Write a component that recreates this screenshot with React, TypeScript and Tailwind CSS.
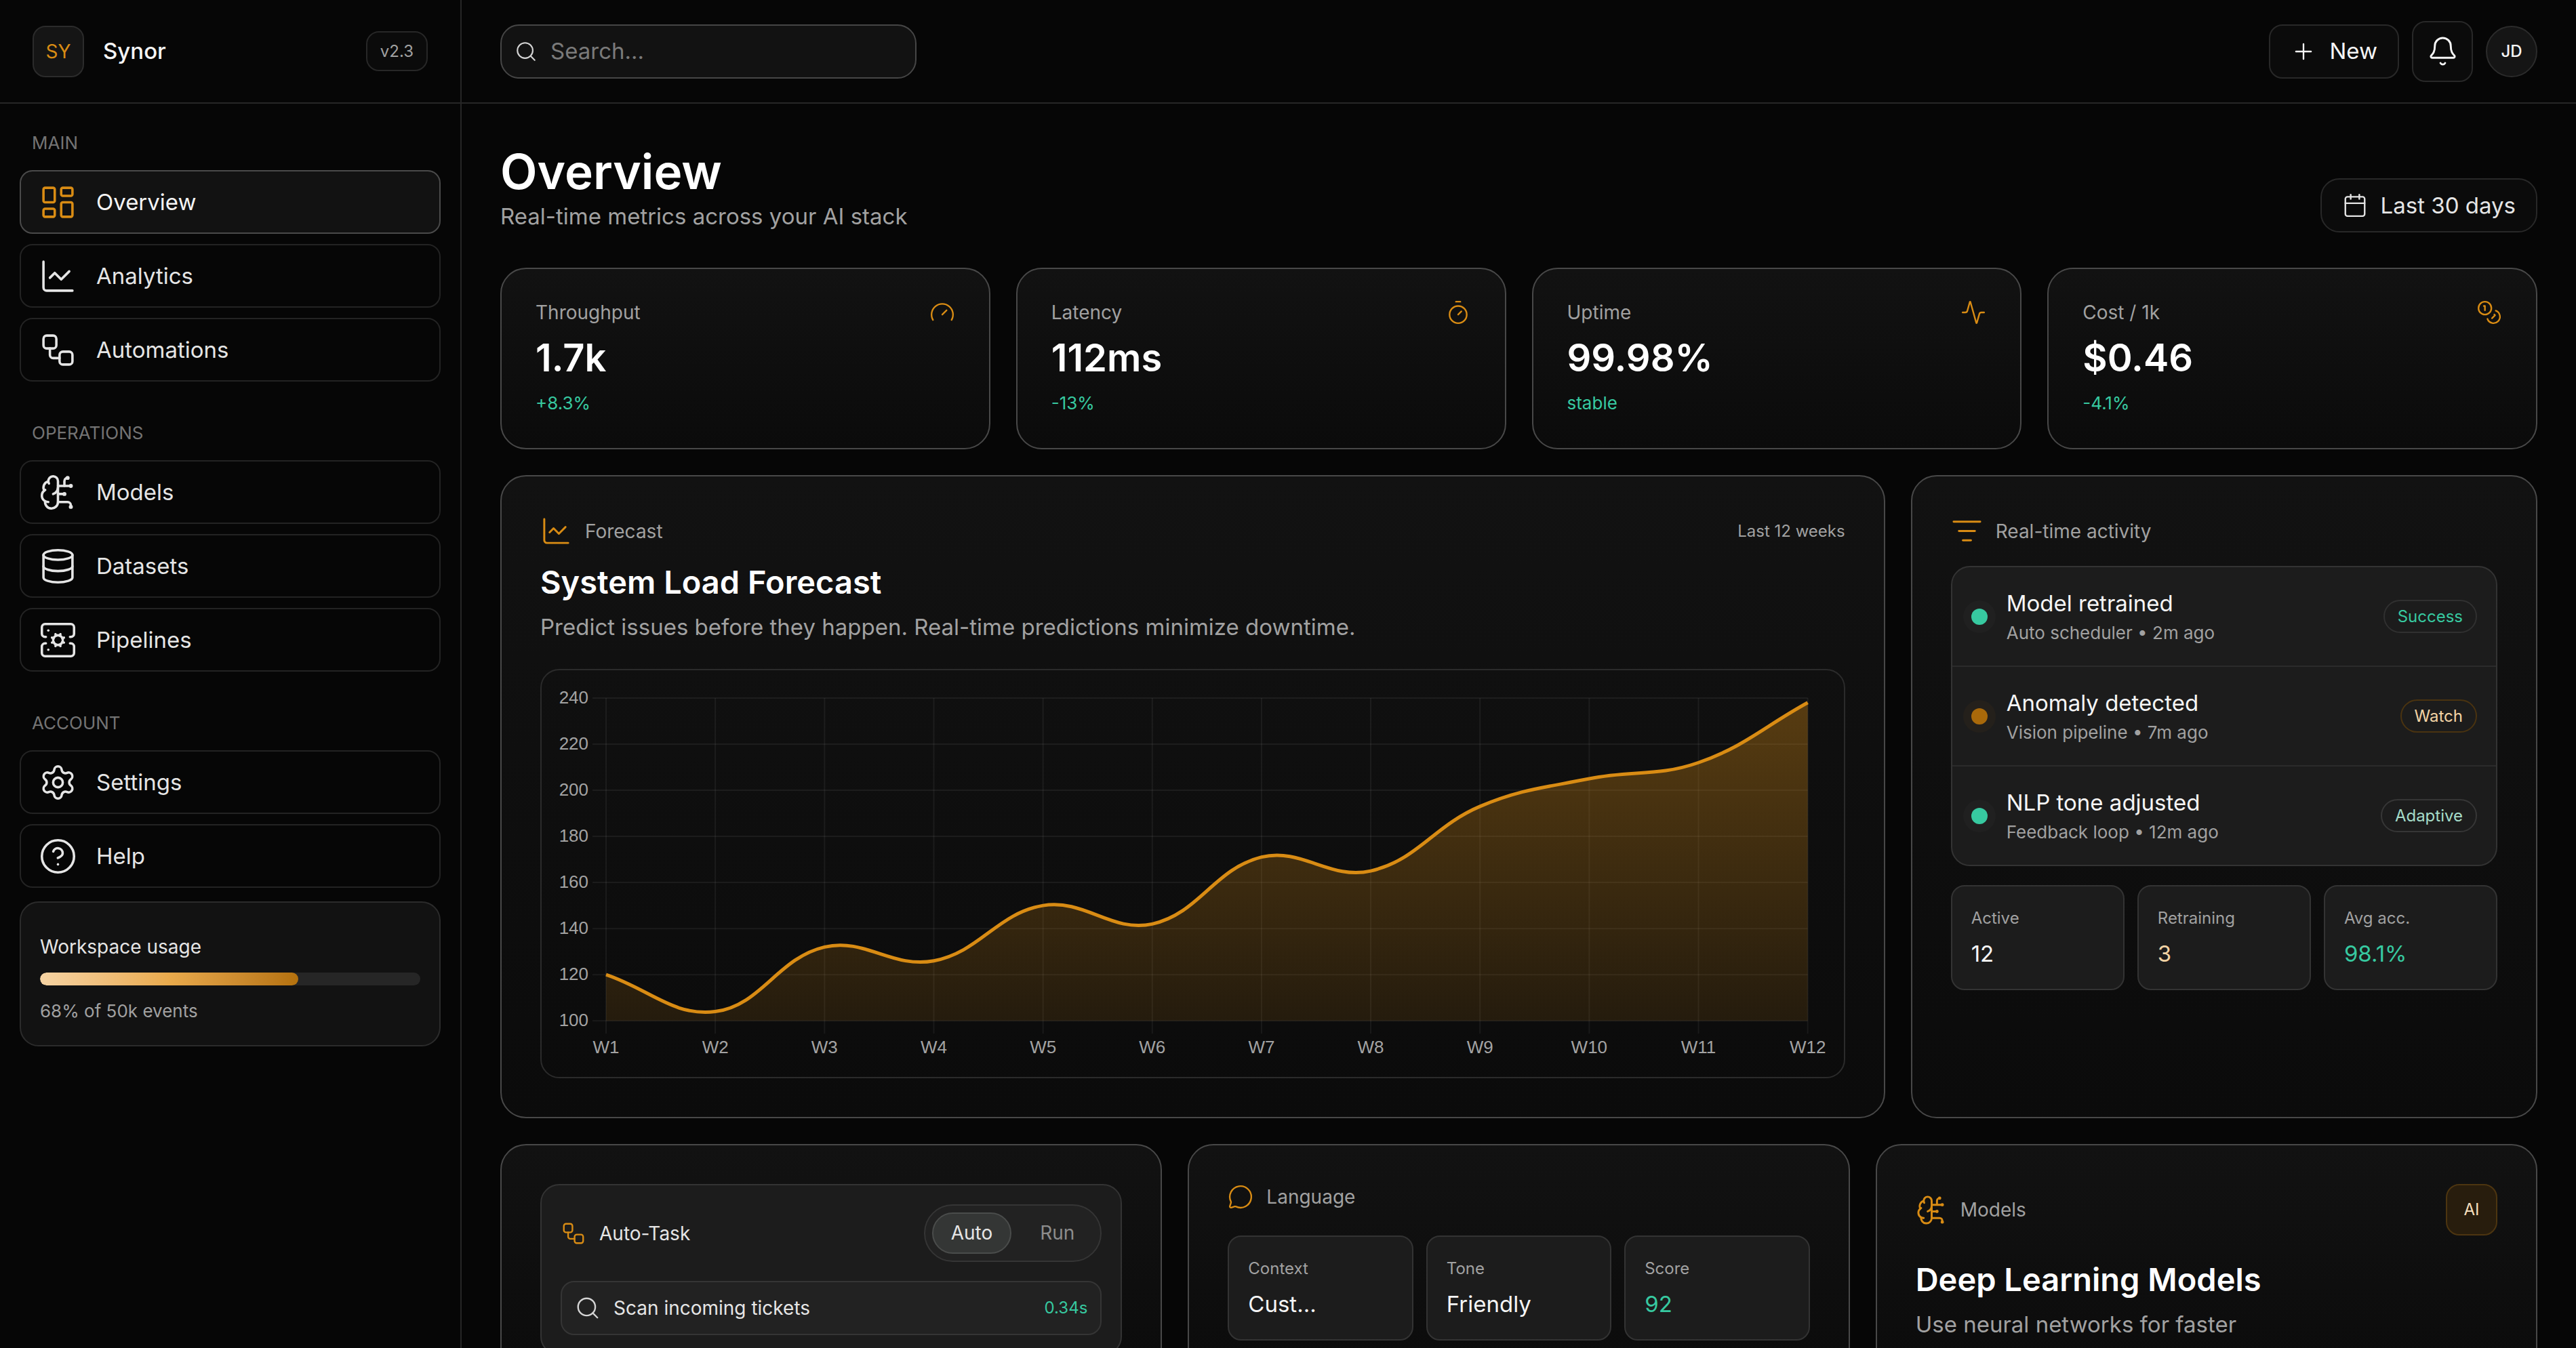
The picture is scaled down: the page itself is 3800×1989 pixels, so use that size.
import {
  Activity,
  Bell,
  BrainCircuit,
  Calendar,
  ChartLine,
  CircleQuestionMark,
  Database,
  Gauge,
  LayoutDashboard,
  ListFilter,
  MessageCircle,
  Plus,
  Search,
  ServerCog,
  Settings,
  Timer,
  Workflow,
} from "lucide-react";

const CoinsIcon = ({ className }: { className?: string }) => (
  <svg
    className={className}
    viewBox="0 0 24 24"
    fill="none"
    stroke="currentColor"
    strokeWidth={1.5}
    strokeLinecap="round"
    strokeLinejoin="round"
    aria-hidden="true"
  >
    <circle cx="8" cy="8" r="6" />
    <path d="M18.09 10.37A6 6 0 1 1 10.34 18" />
    <path d="M7 6h1v4" />
    <path d="m16.71 13.88.7.71-2.82 2.82" />
  </svg>
);

const navSections = [
  {
    title: "MAIN",
    items: [
      { label: "Overview", icon: LayoutDashboard, active: true },
      { label: "Analytics", icon: ChartLine },
      { label: "Automations", icon: Workflow },
    ],
  },
  {
    title: "OPERATIONS",
    items: [
      { label: "Models", icon: BrainCircuit },
      { label: "Datasets", icon: Database },
      { label: "Pipelines", icon: ServerCog },
    ],
  },
  {
    title: "ACCOUNT",
    items: [
      { label: "Settings", icon: Settings },
      { label: "Help", icon: CircleQuestionMark },
    ],
  },
];

const kpis = [
  { label: "Throughput", value: "1.7k", delta: "+8.3%", icon: Gauge },
  { label: "Latency", value: "112ms", delta: "-13%", icon: Timer },
  { label: "Uptime", value: "99.98%", delta: "stable", icon: Activity },
  { label: "Cost / 1k", value: "$0.46", delta: "-4.1%", icon: CoinsIcon },
];

const events = [
  {
    title: "Model retrained",
    meta: "Auto scheduler • 2m ago",
    badge: "Success",
    dot: "bg-[#37c9a0] shadow-[0_0_0_12px_rgba(255,255,255,0.02)]",
    tone: "border-[#303030] text-[#37c9a0]",
  },
  {
    title: "Anomaly detected",
    meta: "Vision pipeline • 7m ago",
    badge: "Watch",
    dot: "bg-[#a9690a] shadow-[0_0_0_12px_rgba(169,105,10,0.06)]",
    tone: "border-[#4a3310] text-[#f2d3a4]",
  },
  {
    title: "NLP tone adjusted",
    meta: "Feedback loop • 12m ago",
    badge: "Adaptive",
    dot: "bg-[#37c9a0] shadow-[0_0_0_12px_rgba(255,255,255,0.02)]",
    tone: "border-[#363636] text-[#a5dcc9]",
  },
];

const usage = 68;

// Chart geometry, in viewBox units
const load = [120, 104, 132, 126, 150, 142, 171, 165, 193, 205, 212, 238];
const ticks = [240, 220, 200, 180, 160, 140, 120, 100];
const chart = { left: 95, right: 1867, top: 41, bottom: 517 };

const xAt = (i: number) => chart.left + (i * (chart.right - chart.left)) / (load.length - 1);
const yAt = (v: number) => chart.bottom - ((v - 100) / 140) * (chart.bottom - chart.top);

const points = load.map((v, i) => ({ x: xAt(i), y: yAt(v) }));

const smoothPath = (tension: number) => {
  const controls = points.map((p, i) => {
    const prev = points[Math.max(i - 1, 0)];
    const next = points[Math.min(i + 1, points.length - 1)];
    const before = Math.hypot(p.x - prev.x, p.y - prev.y);
    const after = Math.hypot(next.x - p.x, next.y - p.y);
    const a = (tension * before) / (before + after);
    const b = (tension * after) / (before + after);
    return {
      inX: p.x - a * (next.x - prev.x),
      inY: p.y - a * (next.y - prev.y),
      outX: p.x + b * (next.x - prev.x),
      outY: p.y + b * (next.y - prev.y),
    };
  });
  return points
    .map((p, i) => {
      if (i === 0) return `M${p.x} ${p.y}`;
      const from = controls[i - 1];
      const to = controls[i];
      return `C${from.outX} ${from.outY} ${to.inX} ${to.inY} ${p.x} ${p.y}`;
    })
    .join(" ");
};

const linePath = smoothPath(0.4);
const areaPath = `${linePath} L${chart.right} ${chart.bottom} L${chart.left} ${chart.bottom} Z`;

const LoadChart = () => (
  <svg viewBox="0 0 1920 600" className="block h-auto w-full" role="img" aria-label="System load by week">
    <defs>
      <linearGradient id="load-fill" gradientUnits="userSpaceOnUse" x1="0" y1={chart.top} x2="0" y2={chart.bottom}>
        <stop offset="0" stopColor="#d98c14" stopOpacity="0.36" />
        <stop offset="1" stopColor="#d98c14" stopOpacity="0.12" />
      </linearGradient>
    </defs>
    <g stroke="#ffffff" strokeOpacity="0.06" strokeWidth="2">
      {ticks.map((t) => (
        <line key={t} x1={chart.left - 20} x2={chart.right} y1={yAt(t)} y2={yAt(t)} />
      ))}
      {points.map((p, i) => (
        <line key={i} x1={p.x} x2={p.x} y1={chart.top} y2={chart.bottom + 19} />
      ))}
    </g>
    <path d={areaPath} fill="url(#load-fill)" />
    <path d={linePath} fill="none" stroke="#d98c14" strokeWidth="5" />
    <g fill="#a3a3a3" fontSize="26" fontFamily="'Liberation Sans', Arial, sans-serif">
      {ticks.map((t) => (
        <text key={t} x={chart.left - 26} y={yAt(t) + 8} textAnchor="end">
          {t}
        </text>
      ))}
      {points.map((p, i) => (
        <text key={i} x={p.x} y={chart.bottom + 48} textAnchor="middle">
          {`W${i + 1}`}
        </text>
      ))}
    </g>
  </svg>
);

const Stat = ({ label, value, tone = "text-neutral-100" }: { label: string; value: string; tone?: string }) => (
  <div className="rounded-[20px] border-2 border-[#333333] bg-[#1c1c1c] p-7">
    <div className="text-[24px]/[38px] text-neutral-400">{label}</div>
    <div className={`mt-[9px] text-[33px]/[48px] ${tone}`}>{value}</div>
  </div>
);

const panel = "rounded-[38px] border-2 border-[#484848] bg-linear-to-b from-[#121212] to-[#0b0b0b]";

const Sidebar = () => (
  <aside className="flex w-[681px] shrink-0 flex-col border-r-2 border-[#262626]">
    <div className="flex h-[153px] shrink-0 items-center border-b-2 border-[#262626] px-12">
      <div className="flex size-[76px] items-center justify-center rounded-[19px] border-2 border-[#2b2b2b] bg-[#151515] text-[28px]/[38px] text-[#d98c14]">
        SY
      </div>
      <span className="ml-7 text-[33px]/[47px] font-medium text-neutral-100">Synor</span>
      <span className="ml-auto rounded-[19px] border-2 border-[#272727] bg-[#0b0b0b] px-[19px] py-[10px] text-[24px]/[35px] text-neutral-400">
        v2.3
      </span>
    </div>
    <nav className="flex flex-col px-[29px] pt-[38px]">
      {navSections.map((section) => (
        <div key={section.title} className="mb-14">
          <div className="mb-5 px-[18px] text-[26px]/[40px] text-[#737373]">{section.title}</div>
          <ul className="flex flex-col gap-[15px]">
            {section.items.map(({ label, icon: Icon, active }: any) => (
              <li key={label}>
                <a
                  href="#"
                  className={`flex h-[94px] items-center gap-7 rounded-[19px] border-2 px-[26px] text-[33px]/[47px] ${
                    active ? "border-[#4a4a4a] bg-[#121212] text-neutral-100" : "border-[#232323] text-neutral-200"
                  }`}
                >
                  <Icon className={`size-[57px] ${active ? "text-[#d98c14]" : ""}`} strokeWidth={1.5} />
                  {label}
                </a>
              </li>
            ))}
          </ul>
        </div>
      ))}
    </nav>
    <div className="mx-[29px] -mt-9 rounded-[28px] border-2 border-[#2b2b2b] bg-[#121212] px-7 pt-[46px] pb-[31px]">
      <div className="text-[28px]/[38px] text-neutral-200">Workspace usage</div>
      <div
        role="progressbar"
        aria-label="Workspace usage"
        aria-valuenow={usage}
        className="mt-[19px] h-[19px] overflow-hidden rounded-full bg-[#262626]"
      >
        <div
          className="h-full rounded-full bg-linear-to-r from-[#f6d3a3] via-[#e9aa4c] to-[#b4710c]"
          style={{ width: `${usage}%` }}
        />
      </div>
      <div className="mt-[19px] text-[26px]/[38px] text-neutral-400">{usage}% of 50k events</div>
    </div>
  </aside>
);

const TopBar = () => (
  <header className="flex h-[153px] shrink-0 items-center justify-between border-b-2 border-[#262626] px-[57px]">
    <label className="flex h-20 w-[614px] items-center gap-[19px] rounded-[28px] border-2 border-[#464646] bg-[#121212] px-[19px] text-neutral-300">
      <Search className="size-[34px] shrink-0" strokeWidth={1.5} />
      <input
        type="search"
        aria-label="Search"
        placeholder="Search..."
        className="w-full bg-transparent text-[33px]/[47px] outline-none placeholder:text-[#7a7a7a]"
      />
    </label>
    <div className="flex items-center gap-[19px]">
      <button className="flex h-20 items-center gap-[19px] rounded-[20px] border-2 border-[#282828] bg-[#0b0b0b] px-[30px] text-[33px]/[47px] text-neutral-100">
        <Plus className="size-[38px]" strokeWidth={1.5} />
        New
      </button>
      <button
        aria-label="Notifications"
        className="flex size-[90px] items-center justify-center rounded-[20px] border-2 border-[#282828] bg-[#0b0b0b] text-neutral-100"
      >
        <Bell className="size-[47px]" strokeWidth={1.5} />
      </button>
      <div className="flex size-[76px] items-center justify-center rounded-full border-2 border-[#2b2b2b] bg-[#151515] text-[24px]/[35px] font-medium text-neutral-100">
        JD
      </div>
    </div>
  </header>
);

const AutoTaskCard = () => (
  <section className={`${panel} p-[57px]`}>
    <div className="rounded-[28px] border-2 border-[#333333] bg-[#1c1c1c] p-7">
      <div className="flex items-center gap-[19px]">
        <Workflow className="size-[38px] text-[#d98c14]" strokeWidth={1.5} />
        <h3 className="text-[28px]/[38px] text-neutral-200">Auto-Task</h3>
        <div className="ml-auto flex gap-[14px] rounded-full border-2 border-[#353535] bg-[#222222] p-[10px]">
          <button className="rounded-full border-2 border-[#4a4c4b] bg-[#343635] px-[26px] py-[10px] text-[28px]/[37px] text-neutral-200">
            Auto
          </button>
          <button className="rounded-full border-2 border-transparent px-[26px] py-[10px] text-[28px]/[37px] text-[#8c8c8c]">
            Run
          </button>
        </div>
      </div>
      <div className="mt-7 flex items-center gap-[19px] rounded-[20px] border-2 border-[#353535] bg-[#222222] p-[19px]">
        <Search className="size-[38px] text-neutral-300" strokeWidth={1.5} />
        <span className="text-[28px]/[38px] text-neutral-200">Scan incoming tickets</span>
        <span className="ml-auto text-[24px]/[38px] text-[#37c9a0]">0.34s</span>
      </div>
    </div>
  </section>
);

const LanguageCard = () => (
  <section className={`${panel} p-[57px]`}>
    <div className="flex items-center gap-[19px]">
      <MessageCircle className="size-[38px] text-[#d98c14]" strokeWidth={1.5} />
      <h3 className="text-[28px]/[38px] text-neutral-400">Language</h3>
    </div>
    <div className="mt-[38px] grid grid-cols-3 gap-[19px]">
      <Stat label="Context" value="Cust..." />
      <Stat label="Tone" value="Friendly" />
      <Stat label="Score" value="92" tone="text-[#37c9a0]" />
    </div>
  </section>
);

const ModelsCard = () => (
  <section className={`${panel} p-[57px]`}>
    <div className="flex items-center gap-[19px]">
      <BrainCircuit className="size-[47px] text-[#d98c14]" strokeWidth={1.5} />
      <span className="text-[28px]/[38px] text-neutral-400">Models</span>
      <span className="ml-auto flex size-[76px] items-center justify-center rounded-[20px] border-2 border-[#4d3510] bg-[#281d0d] text-[24px]/[38px] text-[#f6dfbd]">
        AI
      </span>
    </div>
    <h3 className="mt-8 text-[47px]/[66px] font-semibold text-white">Deep Learning Models</h3>
    <p className="mt-[10px] text-[33px]/[47px] text-neutral-400">Use neural networks for faster</p>
  </section>
);

const App = () => {
  return (
    <div className="flex h-screen overflow-hidden bg-[#060606] font-['Inter',sans-serif] text-neutral-200">
      <Sidebar />
      <div className="flex min-w-0 flex-1 flex-col">
        <TopBar />
        <main className="flex-1 overflow-y-auto px-[57px] pt-[57px] pb-14 [scrollbar-width:none]">
          <div className="flex items-end justify-between">
            <div>
              <h1 className="text-[71px]/[86px] font-semibold text-white">Overview</h1>
              <p className="text-[33px]/[47px] text-neutral-400">Real-time metrics across your AI stack</p>
            </div>
            <button className="flex h-20 items-center gap-[19px] rounded-[28px] border-2 border-[#282828] bg-[#0b0b0b] px-[30px] text-[33px]/[47px] text-neutral-200">
              <Calendar className="size-[38px]" strokeWidth={1.5} />
              Last 30 days
            </button>
          </div>

          <div className="mt-[52px] grid grid-cols-4 gap-[38px]">
            {kpis.map(({ label, value, delta, icon: Icon }) => (
              <section key={label} className={`${panel} px-[50px] pt-[45px] pb-[47px]`}>
                <div className="flex items-center justify-between">
                  <h2 className="text-[28px]/[38px] text-neutral-400">{label}</h2>
                  <Icon className="size-[38px] text-[#d98c14]" strokeWidth={1.5} />
                </div>
                <div className="mt-[10px] text-[56px]/[76px] font-semibold text-white">{value}</div>
                <div className="mt-[10px] text-[26px]/[38px] text-[#37c9a0]">{delta}</div>
              </section>
            ))}
          </div>

          <div className="mt-[38px] grid grid-cols-[221fr_100fr] gap-[38px]">
            <section className={`${panel} p-[57px]`}>
              <div className="flex items-center gap-[19px]">
                <ChartLine className="size-[47px] text-[#d98c14]" strokeWidth={1.5} />
                <span className="text-[28px]/[38px] text-neutral-400">Forecast</span>
                <span className="ml-auto text-[24px]/[38px] text-neutral-400">Last 12 weeks</span>
              </div>
              <h2 className="mt-[19px] text-[47px]/[66px] font-semibold text-white">System Load Forecast</h2>
              <p className="mt-[10px] text-[33px]/[47px] text-neutral-400">
                Predict issues before they happen. Real-time predictions minimize downtime.
              </p>
              <div className="mt-[38px] rounded-[28px] border-2 border-[#2b2b2b]">
                <LoadChart />
              </div>
            </section>

            <section className={`${panel} p-[57px]`}>
              <div className="flex items-center gap-[19px]">
                <ListFilter className="size-[47px] text-[#d98c14]" strokeWidth={1.5} />
                <h2 className="text-[28px]/[38px] text-neutral-400">Real-time activity</h2>
              </div>
              <ul className="mt-7 divide-y-2 divide-[#2b2b2b] rounded-[28px] border-2 border-[#333333] bg-[#1c1c1c]">
                {events.map((event) => (
                  <li key={event.title} className="flex items-center gap-7 px-7 py-[29px]">
                    <span className={`size-6 shrink-0 rounded-full ${event.dot}`} />
                    <div>
                      <div className="text-[33px]/[49px] text-neutral-100">{event.title}</div>
                      <div className="text-[26px]/[38px] text-neutral-400">{event.meta}</div>
                    </div>
                    <span className={`ml-auto rounded-full border-2 px-[19px] py-[5px] text-[24px]/[35px] ${event.tone}`}>
                      {event.badge}
                    </span>
                  </li>
                ))}
              </ul>
              <div className="mt-7 grid grid-cols-3 gap-[19px]">
                <Stat label="Active" value="12" />
                <Stat label="Retraining" value="3" tone="text-[#f2d3a4]" />
                <Stat label="Avg acc." value="98.1%" tone="text-[#37c9a0]" />
              </div>
            </section>
          </div>

          <div className="mt-[38px] grid grid-cols-3 gap-[38px]">
            <AutoTaskCard />
            <LanguageCard />
            <ModelsCard />
          </div>
        </main>
      </div>
    </div>
  );
};

export default App;
